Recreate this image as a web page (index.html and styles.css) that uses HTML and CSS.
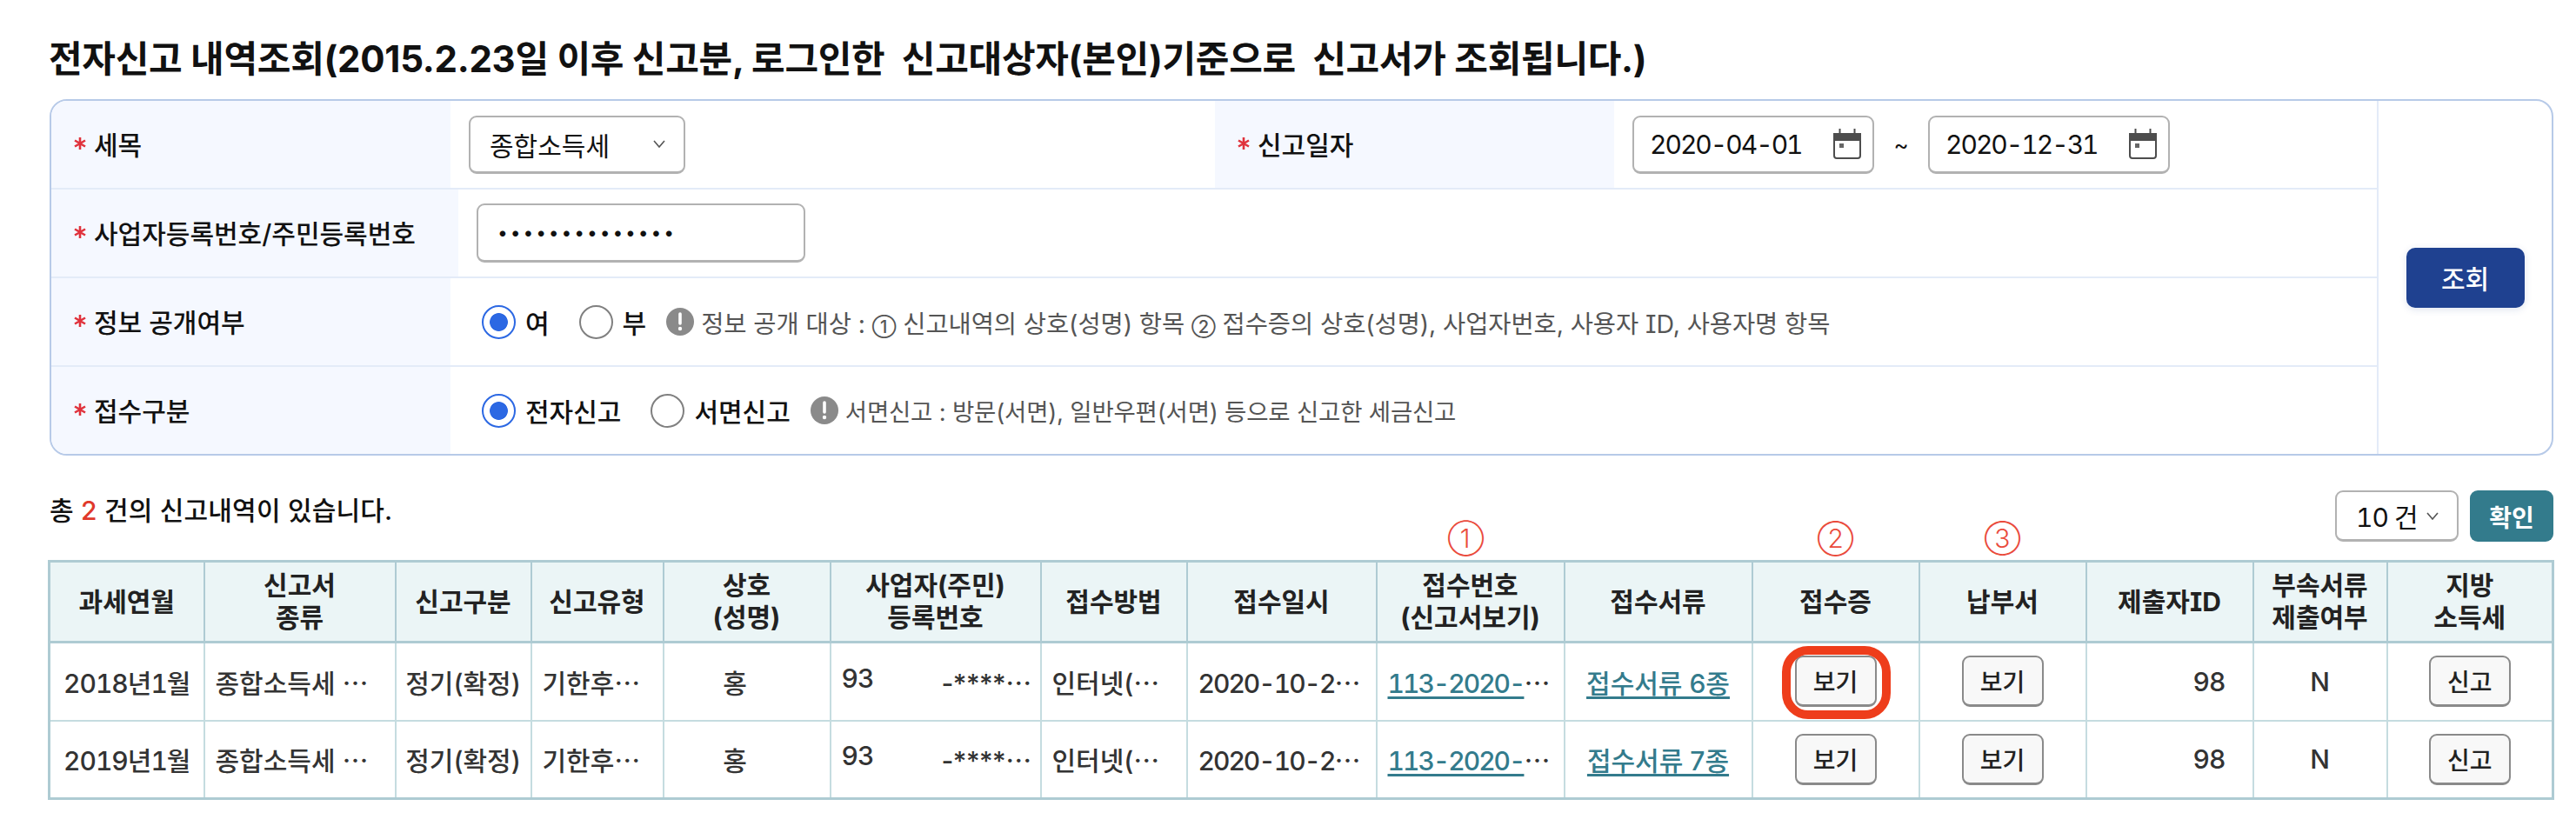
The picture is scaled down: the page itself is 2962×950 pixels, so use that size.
FILE: index.html
```html
<!DOCTYPE html>
<html lang="ko">
<head>
<meta charset="utf-8">
<title>전자신고 내역조회</title>
<link rel="stylesheet" href="styles.css">
</head>
<body>
<main class="page">
  <h1 class="title">전자신고 내역조회(2015.2.23일 이후 신고분, 로그인한&nbsp; 신고대상자(본인)기준으로&nbsp; 신고서가 조회됩니다.)</h1>

  <section class="panel">
    <div class="fields">
      <div class="row">
        <div class="label"><svg class="star" viewBox="0 0 14 14"><path d="M7 0v14M1 3.5l12 7M13 3.5l-12 7"/></svg>세목</div>
        <div class="value value-wide">
          <div class="box select"><span>종합소득세</span><svg class="chev" viewBox="0 0 14 9"><path d="M1 1l6 7 6-7"/></svg></div>
        </div>
        <div class="label"><svg class="star" viewBox="0 0 14 14"><path d="M7 0v14M1 3.5l12 7M13 3.5l-12 7"/></svg>신고일자</div>
        <div class="value">
          <div class="box date"><span class="num">2020-04-01</span>
            <svg class="cal" viewBox="0 0 32 35"><path class="cal-tick" d="M7.5 0v6M24.5 0v6"/><rect class="cal-band" x="0" y="5" width="32" height="9"/><path class="cal-body" d="M1 13v18a3 3 0 0 0 3 3h24a3 3 0 0 0 3-3V13"/><rect class="cal-dot" x="7" y="17" width="5" height="5"/></svg>
          </div>
          <span class="tilde">~</span>
          <div class="box date"><span class="num">2020-12-31</span>
            <svg class="cal" viewBox="0 0 32 35"><path class="cal-tick" d="M7.5 0v6M24.5 0v6"/><rect class="cal-band" x="0" y="5" width="32" height="9"/><path class="cal-body" d="M1 13v18a3 3 0 0 0 3 3h24a3 3 0 0 0 3-3V13"/><rect class="cal-dot" x="7" y="17" width="5" height="5"/></svg>
          </div>
        </div>
      </div>
      <div class="row">
        <div class="label label-long"><svg class="star" viewBox="0 0 14 14"><path d="M7 0v14M1 3.5l12 7M13 3.5l-12 7"/></svg>사업자등록번호/주민등록번호</div>
        <div class="value">
          <div class="box idbox"><span class="dots">••••••••••••••</span></div>
        </div>
      </div>
      <div class="row">
        <div class="label"><svg class="star" viewBox="0 0 14 14"><path d="M7 0v14M1 3.5l12 7M13 3.5l-12 7"/></svg>정보 공개여부</div>
        <div class="value value-radio">
          <span class="opt"><span class="radio on"></span>여</span>
          <span class="opt"><span class="radio"></span>부</span>
          <svg class="info" viewBox="0 0 32 32"><circle cx="16" cy="16" r="16"/><path d="M16 7v11"/><circle class="info-dot" cx="16" cy="24" r="2.2"/></svg>
          <span class="note">정보 공개 대상 : <span class="circ">①</span> 신고내역의 상호(성명) 항목 <span class="circ">②</span> 접수증의 상호(성명), 사업자번호, 사용자 ID, 사용자명 항목</span>
        </div>
      </div>
      <div class="row">
        <div class="label"><svg class="star" viewBox="0 0 14 14"><path d="M7 0v14M1 3.5l12 7M13 3.5l-12 7"/></svg>접수구분</div>
        <div class="value value-radio">
          <span class="opt"><span class="radio on"></span>전자신고</span>
          <span class="opt"><span class="radio"></span>서면신고</span>
          <svg class="info" viewBox="0 0 32 32"><circle cx="16" cy="16" r="16"/><path d="M16 7v11"/><circle class="info-dot" cx="16" cy="24" r="2.2"/></svg>
          <span class="note note-short">서면신고 : 방문(서면), 일반우편(서면) 등으로 신고한 세금신고</span>
        </div>
      </div>
    </div>
    <div class="side"><button class="search" type="button">조회</button></div>
  </section>

  <div class="summary">
    <p class="total">총 <b class="count">2</b> 건의 신고내역이 있습니다.</p>
    <div class="pager">
      <div class="box pagesize"><span class="tab">10 건</span><svg class="chev" viewBox="0 0 14 9"><path d="M1 1l6 7 6-7"/></svg></div>
      <button class="confirm" type="button">확인</button>
    </div>
  </div>

  <table class="grid">
    <colgroup>
      <col class="c1"><col class="c2"><col class="c3"><col class="c4"><col class="c5"><col class="c6"><col class="c7"><col class="c8"><col class="c9"><col class="c10"><col class="c11"><col class="c12"><col class="c13"><col class="c14"><col class="c15">
    </colgroup>
    <thead>
      <tr>
        <th>과세연월</th><th>신고서<br>종류</th><th>신고구분</th><th>신고유형</th><th>상호<br>(성명)</th><th>사업자(주민)<br>등록번호</th><th>접수방법</th><th>접수일시</th>
        <th>접수번호<br>(신고서보기)<span class="mark mark1">①</span></th>
        <th>접수서류</th>
        <th>접수증<span class="mark">②</span></th>
        <th>납부서<span class="mark">③</span></th>
        <th>제출자ID</th><th>부속서류<br>제출여부</th><th>지방<br>소득세</th>
      </tr>
    </thead>
    <tbody>
      <tr>
        <td class="tab">2018년1월</td>
        <td class="left">종합소득세 ⋯</td>
        <td>정기(확정)</td>
        <td class="left">기한후⋯</td>
        <td class="name">홍</td>
        <td class="left"><div class="rrn"><span class="tab">93</span><span class="mask">-****⋯</span></div></td>
        <td class="left">인터넷(⋯</td>
        <td class="left"><span class="num">2020-10-2</span>⋯</td>
        <td class="left"><a class="link num" href="#">113-2020-</a><span class="more">⋯</span></td>
        <td><a class="link" href="#">접수서류 6종</a></td>
        <td class="btn-cell"><button class="view" type="button">보기</button><span class="ring"></span></td>
        <td class="btn-cell"><button class="view" type="button">보기</button></td>
        <td class="right tab">98</td>
        <td>N</td>
        <td class="btn-cell"><button class="view" type="button">신고</button></td>
      </tr>
      <tr>
        <td class="tab">2019년1월</td>
        <td class="left">종합소득세 ⋯</td>
        <td>정기(확정)</td>
        <td class="left">기한후⋯</td>
        <td class="name">홍</td>
        <td class="left"><div class="rrn"><span class="tab">93</span><span class="mask">-****⋯</span></div></td>
        <td class="left">인터넷(⋯</td>
        <td class="left"><span class="num">2020-10-2</span>⋯</td>
        <td class="left"><a class="link num" href="#">113-2020-</a><span class="more">⋯</span></td>
        <td><a class="link" href="#">접수서류 7종</a></td>
        <td class="btn-cell"><button class="view" type="button">보기</button></td>
        <td class="btn-cell"><button class="view" type="button">보기</button></td>
        <td class="right tab">98</td>
        <td>N</td>
        <td class="btn-cell"><button class="view" type="button">신고</button></td>
      </tr>
    </tbody>
  </table>
</main>
</body>
</html>
```

FILE: styles.css
```css
* { box-sizing: border-box; }
html, body { margin: 0; background: #fff; }
body {
  font-family: "Inter", "Noto Sans CJK KR", sans-serif;
  font-feature-settings: "cv08";
  font-size: 30px;
  color: #111;
}
button { font: inherit; letter-spacing: inherit; cursor: pointer; }
.num { font-feature-settings: "cv08", "tnum"; letter-spacing: -2px; }
.tab { font-feature-settings: "cv08", "tnum"; letter-spacing: -1px; }
.page { padding: 41px 26px 0 57px; }
.title { margin: 0 0 19px -1px; font-size: 42px; line-height: 54px; font-weight: 700; color: #111; letter-spacing: -0.28px; }

.panel { display: flex; border: 2px solid #b7cae8; border-radius: 20px; height: 410px; overflow: hidden; }
.fields { flex: 1; display: flex; flex-direction: column; }
.row { display: flex; flex: 1; border-bottom: 2px solid #e3ebf8; }
.row:last-child { border-bottom: 0; }
.label {
  width: 459px; flex: none; display: flex; align-items: center; gap: 9px;
  padding: 0 0 3px 26px; background: #f5f8ff; font-weight: 500;
}
.label-long { width: 468px; }
.star { width: 14px; height: 14px; flex: none; fill: none; stroke: #e0323c; stroke-width: 2.6; }
.value { flex: 1; display: flex; align-items: center; padding-left: 21px; }
.value-wide { flex: none; width: 879px; }
.value-radio { padding-left: 36px; }

.box {
  display: flex; align-items: center; justify-content: space-between; height: 67px;
  border: 2px solid #b2b2b2; border-bottom-width: 3px; border-radius: 9px; background: #fff;
}
.select { width: 249px; padding: 0 21px 0 22px; }
.chev { width: 14px; height: 9px; fill: none; stroke: #555; stroke-width: 1.6; flex: none; }
.date { width: 278px; padding: 0 13px 0 18px; }
.cal { width: 32px; height: 35px; flex: none; }
.cal-tick { stroke: #4d4d4d; stroke-width: 2; fill: none; }
.cal-band { fill: #4d4d4d; }
.cal-body { stroke: #4d4d4d; stroke-width: 2; fill: none; }
.cal-dot { fill: #666; }
.tilde { width: 62px; text-align: center; font-size: 26px; }
.idbox { width: 378px; height: 68px; padding-left: 22px; justify-content: flex-start; }
.dots { font-size: 21px; letter-spacing: 2.9px; }

.opt { display: inline-flex; align-items: center; gap: 11px; margin-right: 34px; font-weight: 500; }
.radio { width: 39px; height: 39px; border-radius: 50%; border: 2px solid #808080; background: #fff; flex: none; }
.radio.on { border-color: #2c68e3; background: radial-gradient(circle, #2c68e3 0 10px, #fff 10.8px); }
.info { width: 32px; height: 32px; flex: none; margin: 0 8px 0 -11px; fill: #8a8a8a; }
.info path { stroke: #fff; stroke-width: 3.6; stroke-linecap: round; }
.info .info-dot { fill: #fff; }
.note { font-size: 28.5px; letter-spacing: -0.1px; color: #555; white-space: nowrap; }
.note-short { font-size: 27.5px; letter-spacing: -0.2px; }
.circ { font-size: 20px; font-weight: 500; }

.side { width: 201px; flex: none; display: flex; align-items: center; justify-content: center; border-left: 2px solid #e3ebf8; }
.search { width: 136px; height: 69px; border: 0; border-radius: 10px; background: #1f4190; color: #fff; font-weight: 500; box-shadow: 0 2px 8px rgba(31,65,144,.15); }

.summary { display: flex; justify-content: space-between; align-items: flex-start; margin-top: 40px; }
.total { margin: 0; font-size: 30px; line-height: 46px; font-weight: 500; letter-spacing: 0.2px; }
.count { color: #e0392b; font-weight: 500; }
.pager { display: flex; gap: 13px; }
.pagesize { width: 142px; height: 59px; padding: 0 21px 0 22px; }
.confirm { width: 96px; height: 59px; border: 0; border-radius: 9px; background: #337b8c; color: #fff; font-weight: 600; font-size: 28px; }

.grid { width: 2879px; margin: 21px 0 0 -2px; table-layout: fixed; border-collapse: collapse; border: 3px solid #aecbd3; }
.c1 { width: 178px; } .c2 { width: 220px; } .c3 { width: 156px; } .c4 { width: 152px; } .c5 { width: 192px; }
.c6 { width: 242px; } .c7 { width: 168px; } .c8 { width: 218px; } .c9 { width: 216px; } .c10 { width: 216px; }
.c11 { width: 192px; } .c12 { width: 192px; } .c13 { width: 192px; } .c14 { width: 154px; } .c15 { width: 191px; }
.grid th {
  position: relative; height: 93px; padding: 0; background: #ebf5f6; border: 2px solid #aecbd3;
  border-bottom-width: 3px; font-size: 30px; line-height: 37px; font-weight: 700; color: #222; white-space: nowrap;
}
.grid td {
  position: relative; height: 90px; padding: 0; border: 2px solid #c5dce0; text-align: center;
  font-size: 30px; color: #333; white-space: nowrap; font-weight: 500;
}
.grid td.left { text-align: left; padding-left: 12px; }
.grid td.right { text-align: right; padding-right: 31px; }
.grid td.name { padding-right: 27px; }
.rrn { display: flex; gap: 78px; }
.mask { letter-spacing: -0.5px; }
.link { color: #337b8c; text-decoration: underline; text-decoration-thickness: 3px; text-underline-offset: 4px; }
.more { color: #333; }
.mark { position: absolute; left: 50%; bottom: 100%; margin-bottom: 6px; transform: translateX(-50%); font-size: 30px; line-height: 44px; font-weight: 300; color: #ea4b3c; }
.mark1 { margin-left: -5px; }
.view {
  display: block; width: 94px; height: 59px; margin: 0 auto; padding: 0;
  background: #f8f8f8; border: 2px solid #8a8a8a; border-bottom-width: 3px; border-radius: 9px; color: #222;
  font-size: 28px;
}
.ring { position: absolute; left: 33px; top: 3px; width: 125px; height: 84px; border: 10px solid #ee3d1b; border-radius: 30px; }
```
